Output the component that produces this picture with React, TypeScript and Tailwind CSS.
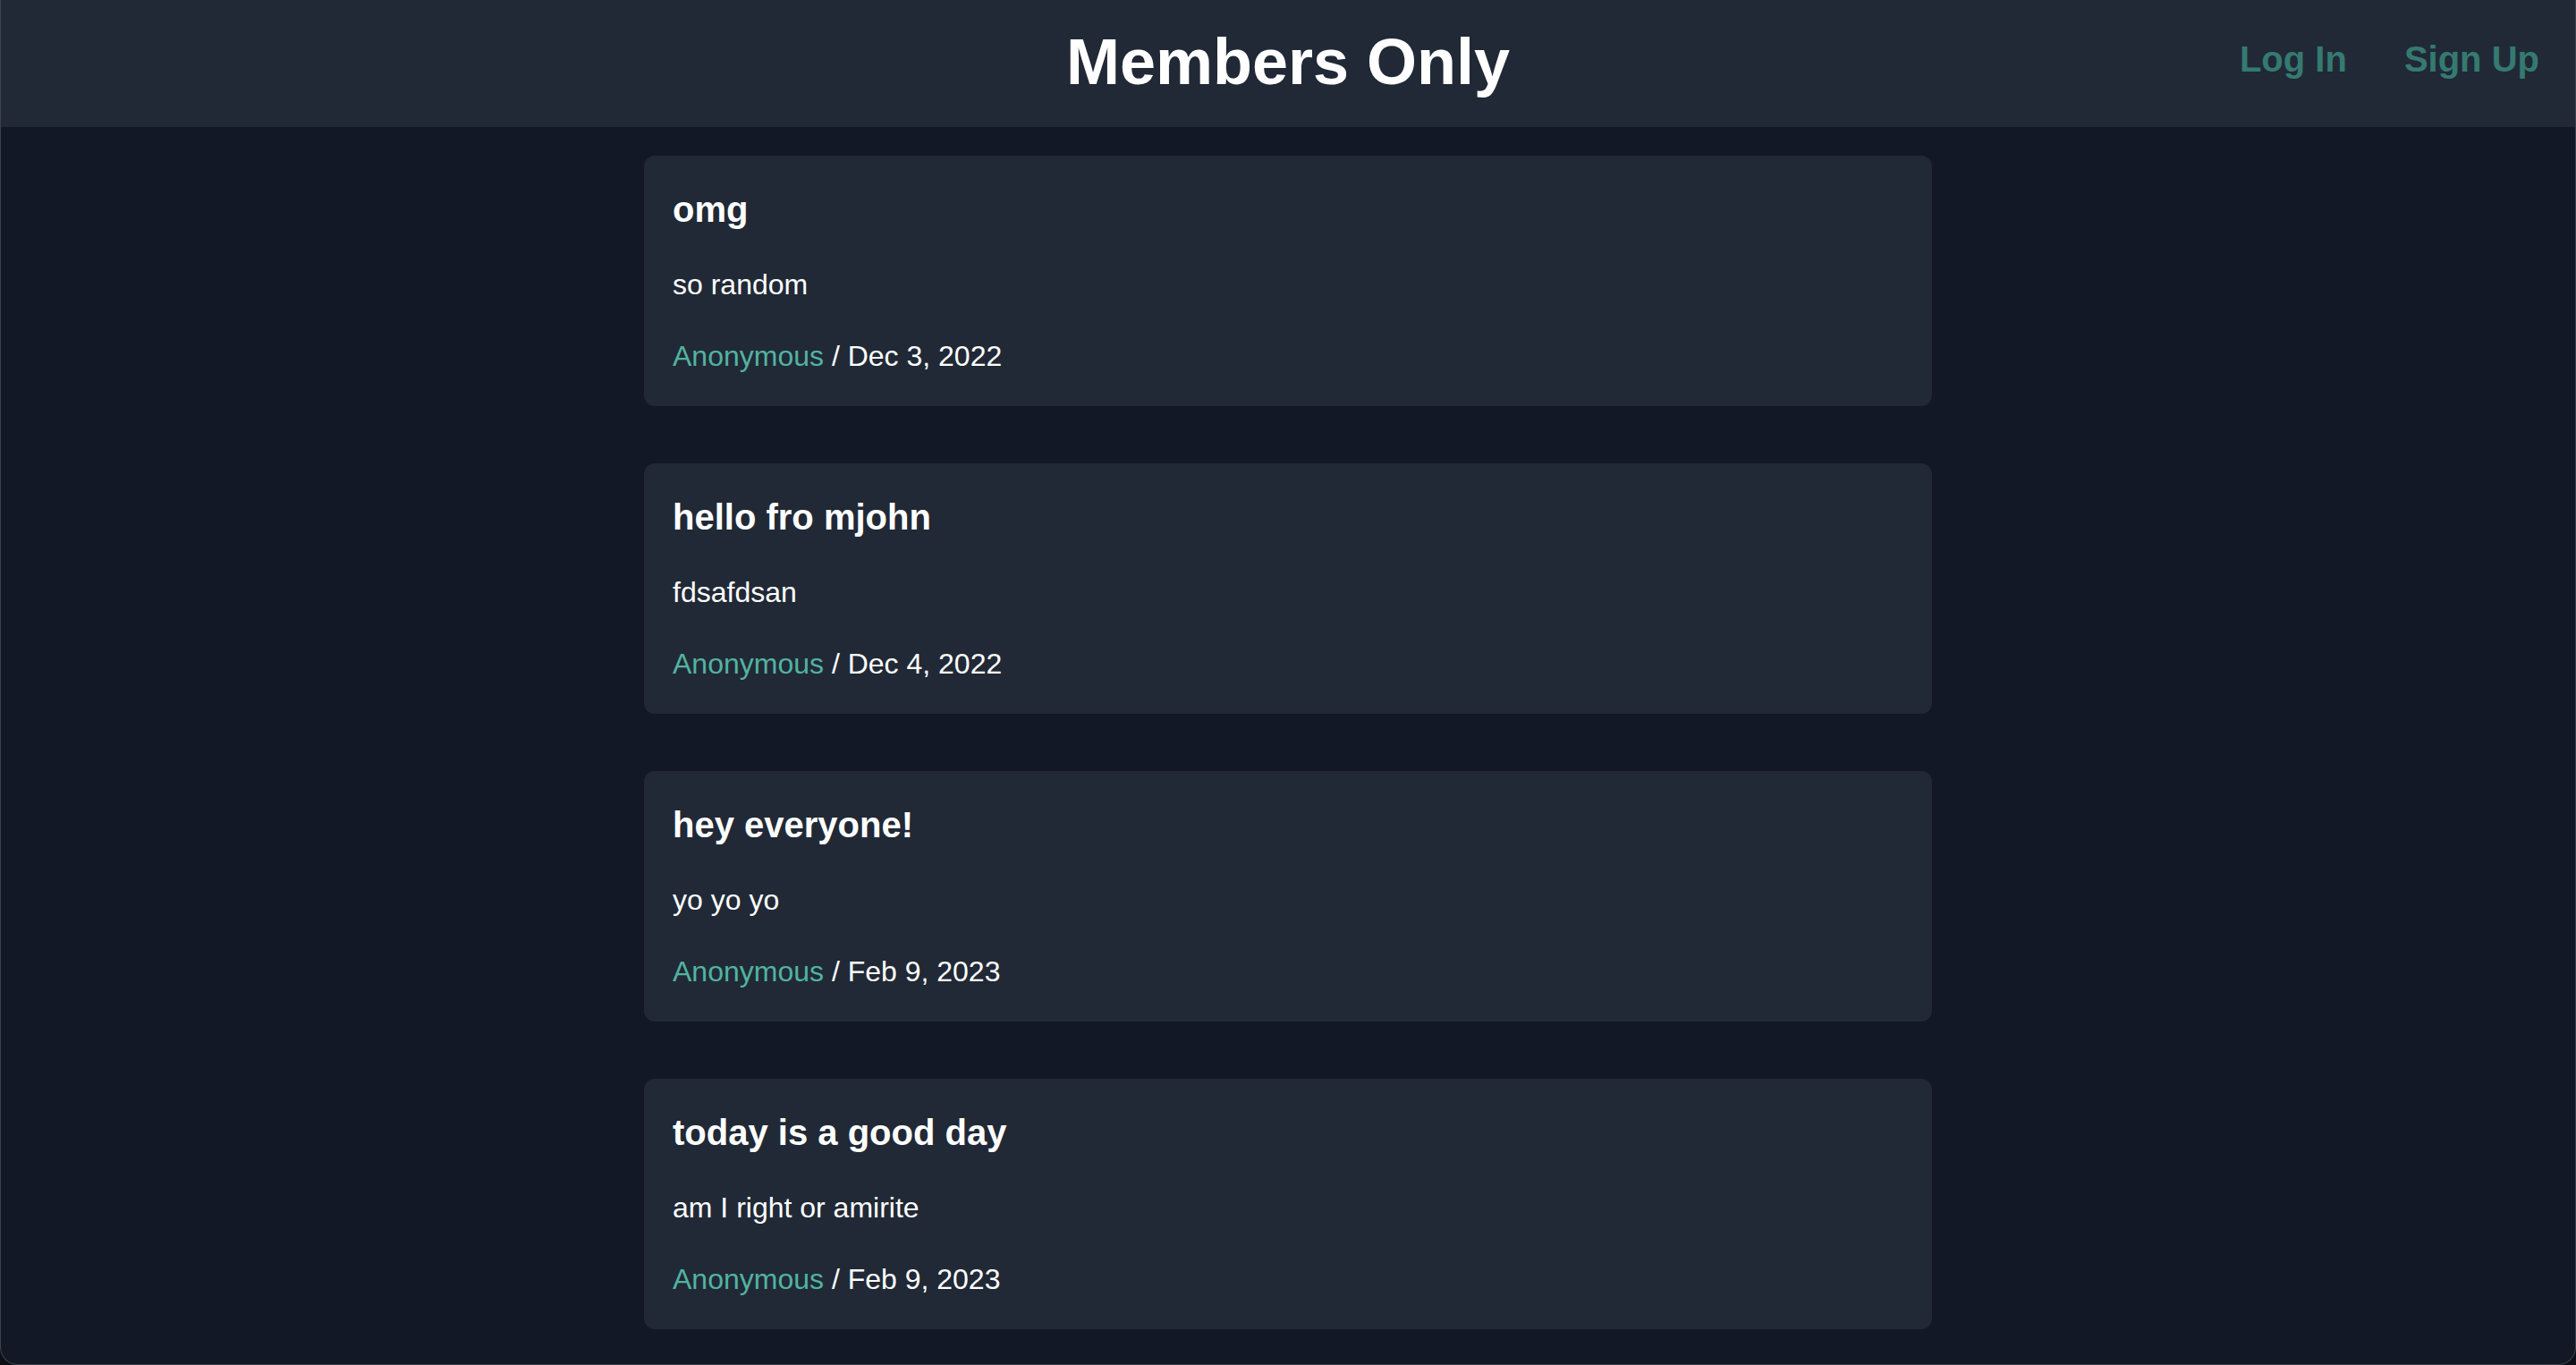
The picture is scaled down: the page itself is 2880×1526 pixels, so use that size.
const posts = [
  { title: "omg", body: "so random", author: "Anonymous", date: "Dec 3, 2022" },
  { title: "hello fro mjohn", body: "fdsafdsan", author: "Anonymous", date: "Dec 4, 2022" },
  { title: "hey everyone!", body: "yo yo yo", author: "Anonymous", date: "Feb 9, 2023" },
  { title: "today is a good day", body: "am I right or amirite", author: "Anonymous", date: "Feb 9, 2023" },
];

function Post({ title, body, author, date }: (typeof posts)[number]) {
  return (
    <div className="flex flex-col gap-[32px] rounded-[12px] bg-[#212936] p-[32px] text-white">
      <h2 className="text-[40px] font-bold leading-[56px]">{title}</h2>
      <p className="text-[32px] leading-[48px]">{body}</p>
      <p className="text-[32px] leading-[48px]">
        <span className="text-[#52b3a0]">{author}</span> / {date}
      </p>
    </div>
  );
}

export default function App() {
  return (
    <div className="h-[1526px] w-full bg-[#0c0f15] font-['Liberation_Sans',Arial,sans-serif]">
      <div className="flex h-full flex-col overflow-hidden rounded-b-[20px] border border-t-0 border-[#3d414b] bg-[#121826]">
        {/* header */}
        <header className="grid h-[142px] shrink-0 grid-cols-3 bg-[#212936]">
          <div />
          <div className="flex items-center justify-center">
            <h1 className="whitespace-nowrap pb-[4px] text-[72px] font-bold leading-[80px] text-white">
              Members Only
            </h1>
          </div>
          <nav className="flex justify-end gap-[64px] pr-[40px] pt-[38px] text-[40px] font-bold leading-[56px] text-[#357a70]">
            <a href="#">Log In</a>
            <a href="#">Sign Up</a>
          </nav>
        </header>

        {/* posts */}
        <main className="mx-auto flex w-[1440px] flex-col gap-[64px] pt-[32px]">
          {posts.map((p, i) => (
            <Post key={i} {...p} />
          ))}
        </main>
      </div>
    </div>
  );
}
